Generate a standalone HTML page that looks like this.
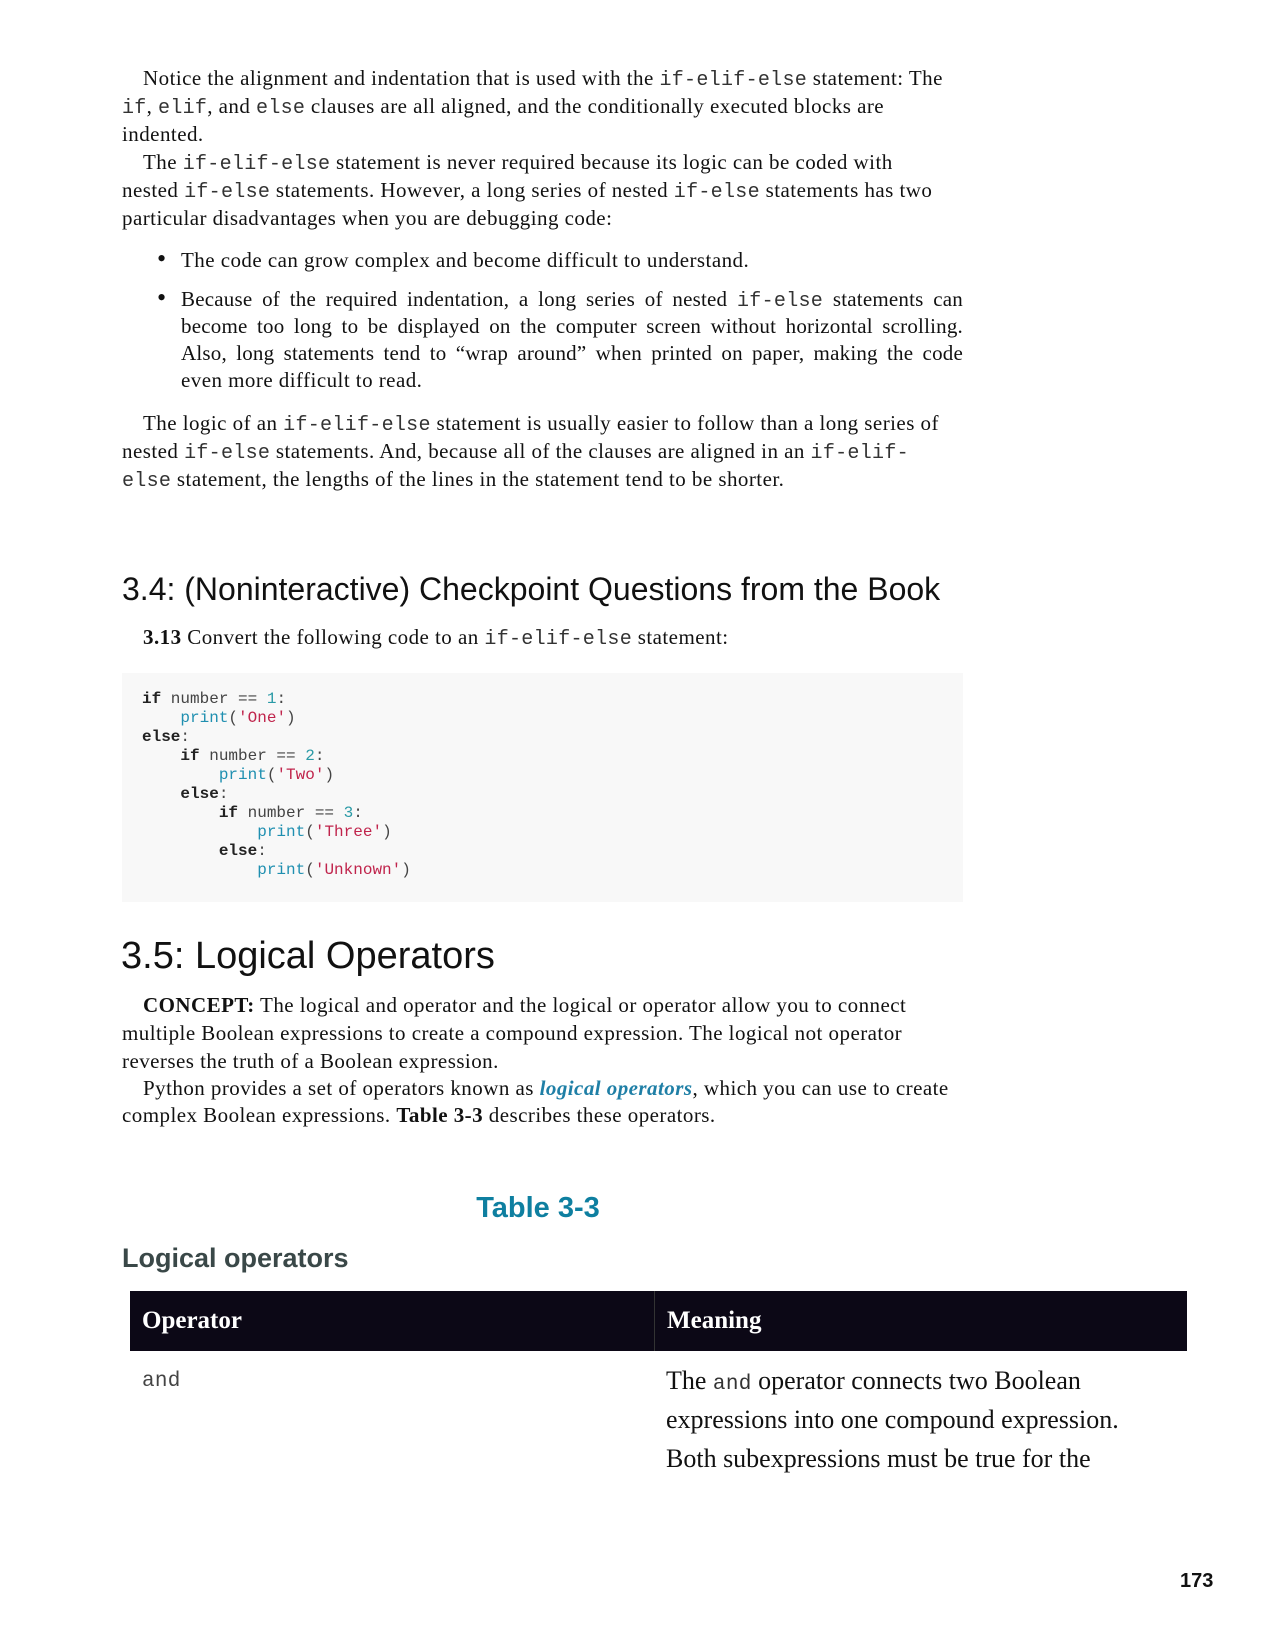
<!DOCTYPE html>
<html><head><meta charset="utf-8"><style>
*{margin:0;padding:0;box-sizing:border-box}
body{width:1275px;height:1632px;background:#fff;position:relative;overflow:hidden;font-family:"Liberation Serif",serif;color:#111}
.l{position:absolute;font-size:21px;letter-spacing:0.45px;line-height:28px;white-space:nowrap;height:28px}
.j{text-align:justify;text-align-last:justify}
code,.m{font-family:"Liberation Mono",monospace;font-size:20px;letter-spacing:0.3px;color:#333}
.h{position:absolute;font-family:"Liberation Sans",sans-serif;color:#111;white-space:nowrap}
.code{position:absolute;left:122px;top:673px;width:841px;height:229px;background:#f8f8f8}
.cl{position:absolute;left:142px;font-family:"Liberation Mono",monospace;font-size:16px;line-height:19px;color:#444;white-space:pre}
.k{font-weight:bold;color:#222}.n{color:#2a9aa6}.f{color:#1f8fb0}.s{color:#c0244c}
.th{position:absolute;top:1291px;height:60px;background:#0c0816;color:#fff;font-size:25px;font-weight:bold;line-height:60px;padding-left:12px}
.td{position:absolute;font-size:26px;line-height:39px;white-space:nowrap}
.b{font-size:26px;line-height:26px}
</style></head><body>
<div class="l" style="left:143px;top:64px">Notice the alignment and indentation that is used with the <code>if-elif-else</code> statement: The</div>
<div class="l" style="left:122px;top:92px"><code>if</code>, <code>elif</code>, and <code>else</code> clauses are all aligned, and the conditionally executed blocks are</div>
<div class="l" style="left:122px;top:120px">indented.</div>
<div class="l" style="left:143px;top:148px">The <code>if-elif-else</code> statement is never required because its logic can be coded with</div>
<div class="l" style="left:122px;top:176px">nested <code>if-else</code> statements. However, a long series of nested <code>if-else</code> statements has two</div>
<div class="l" style="left:122px;top:204px">particular disadvantages when you are debugging code:</div>
<div class="l b" style="left:157px;top:246px">•</div>
<div class="l" style="left:181px;top:246px">The code can grow complex and become difficult to understand.</div>
<div class="l b" style="left:157px;top:285px">•</div>
<div class="l j" style="left:181px;top:285px;width:782px;letter-spacing:0.2px">Because of the required indentation, a long series of nested <code>if-else</code> statements can</div>
<div class="l j" style="left:181px;top:312px;width:782px;letter-spacing:0.2px">become too long to be displayed on the computer screen without horizontal scrolling.</div>
<div class="l j" style="left:181px;top:339px;width:782px;letter-spacing:0.2px">Also, long statements tend to “wrap around” when printed on paper, making the code</div>
<div class="l" style="left:181px;top:366px">even more difficult to read.</div>
<div class="l" style="left:143px;top:409px">The logic of an <code>if-elif-else</code> statement is usually easier to follow than a long series of</div>
<div class="l" style="left:122px;top:437px">nested <code>if-else</code> statements. And, because all of the clauses are aligned in an <code>if-elif-</code></div>
<div class="l" style="left:122px;top:465px"><code>else</code> statement, the lengths of the lines in the statement tend to be shorter.</div>

<div class="h" style="left:122px;top:571px;font-size:32px">3.4: (Noninteractive) Checkpoint Questions from the Book</div>
<div class="l" style="left:143px;top:623px"><b>3.13</b> Convert the following code to an <code>if-elif-else</code> statement:</div>

<div class="code"></div>
<div class="cl" style="top:690px"><span class="k">if</span> number == <span class="n">1</span>:
    <span class="f">print</span>(<span class="s">'One'</span>)
<span class="k">else</span>:
    <span class="k">if</span> number == <span class="n">2</span>:
        <span class="f">print</span>(<span class="s">'Two'</span>)
    <span class="k">else</span>:
        <span class="k">if</span> number == <span class="n">3</span>:
            <span class="f">print</span>(<span class="s">'Three'</span>)
        <span class="k">else</span>:
            <span class="f">print</span>(<span class="s">'Unknown'</span>)</div>

<div class="h" style="left:121px;top:935px;font-size:38px">3.5: Logical Operators</div>
<div class="l" style="left:143px;top:991px"><b>CONCEPT:</b> The logical and operator and the logical or operator allow you to connect</div>
<div class="l" style="left:122px;top:1019px">multiple Boolean expressions to create a compound expression. The logical not operator</div>
<div class="l" style="left:122px;top:1047px">reverses the truth of a Boolean expression.</div>
<div class="l" style="left:143px;top:1074px">Python provides a set of operators known as <b><i style="color:#1f7fa6">logical operators</i></b>, which you can use to create</div>
<div class="l" style="left:122px;top:1101px">complex Boolean expressions. <b>Table 3-3</b> describes these operators.</div>

<div class="h" style="left:0;width:1076px;text-align:center;top:1192px;font-size:29px;font-weight:bold;color:#0e7fa0">Table 3-3</div>
<div class="h" style="left:122px;top:1243px;font-size:27px;font-weight:bold;color:#3a4848">Logical operators</div>

<div class="th" style="left:130px;width:525px;border-right:1px solid #333">Operator</div>
<div class="th" style="left:655px;width:532px">Meaning</div>
<div class="td m" style="left:142px;top:1362px;font-size:21px;color:#444">and</div>
<div class="td" style="left:666px;top:1361px">The <span class="m" style="font-size:21px">and</span> operator connects two Boolean</div>
<div class="td" style="left:666px;top:1400px">expressions into one compound expression.</div>
<div class="td" style="left:666px;top:1439px">Both subexpressions must be true for the</div>

<div class="h" style="left:1180px;top:1570px;font-size:20px;font-weight:bold">173</div>
</body></html>
